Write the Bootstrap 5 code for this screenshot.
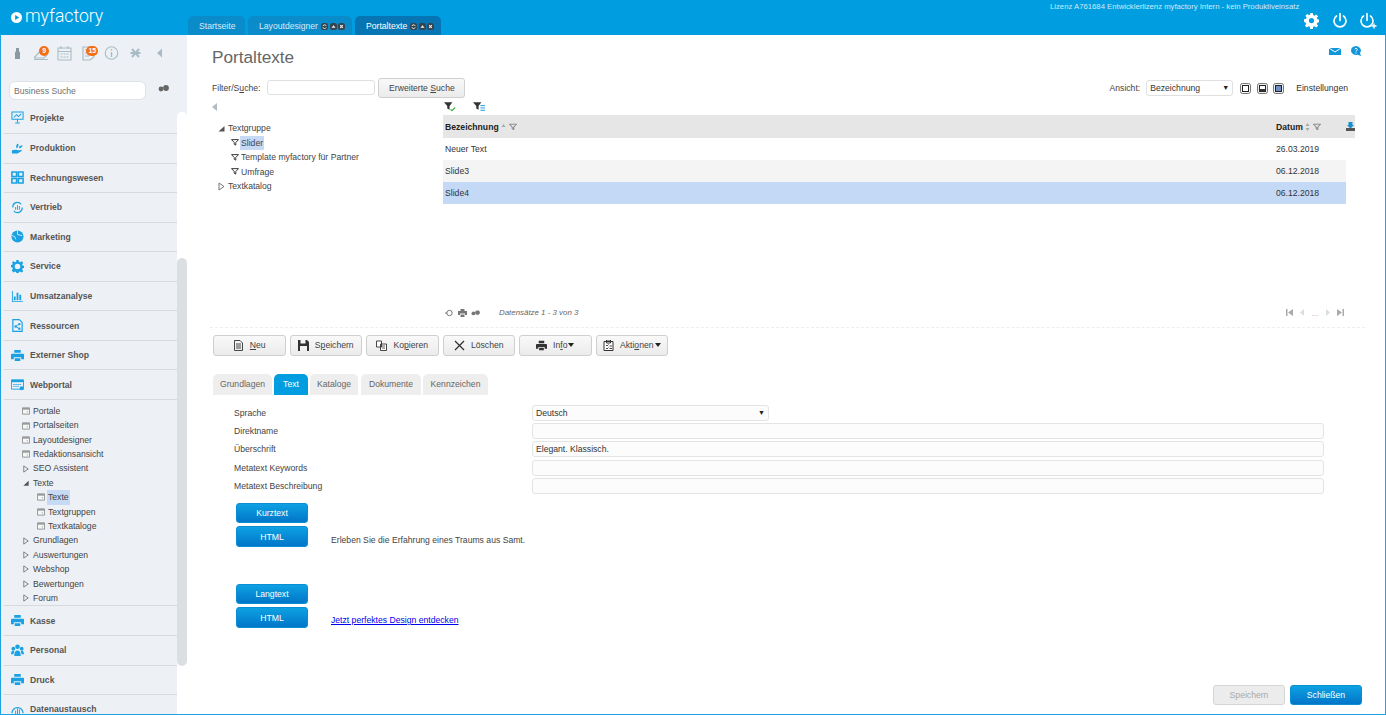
<!doctype html>
<html lang="de">
<head>
<meta charset="utf-8">
<title>Portaltexte</title>
<link rel="stylesheet" href="https://cdn.jsdelivr.net/npm/bootstrap@5.3.0/dist/css/bootstrap.min.css">
<style>
html,body{height:100%;}
body{width:1386px;height:715px;overflow:hidden;font:8.65px/12px "Liberation Sans",Arial,sans-serif;color:#444;background:#fff;}
.frame{width:1386px;height:715px;border:solid #1ea2e0;border-width:0 1px 1px 1px;}
.topbar{height:35px;background:#009ee0;margin:0 -1px;position:relative;}
.brand{width:188px;padding:4px 0 0 11px;color:#fff;font:300 17.6px/24px Roboto,"Liberation Sans",sans-serif;}
.brand svg{width:11px;height:11px;margin-right:3px;margin-top:8px;flex:none;}
.tabstrip{padding-top:16px;gap:3px;}
.toptab{height:19px;padding:1px 0 0 11px;background:#0a8ccb;color:#d6eaf5;border-radius:5px 5px 0 0;line-height:19px;white-space:nowrap;}
.toptab.on{background:#0775b3;color:#fff;}
.t1{width:57px;}.t2{width:104px;}.t3{width:86px;}
.tabctl{width:7px;height:7px;margin-left:1.6px;vertical-align:-1px;}
.tabctl.lead{margin-left:3px;}
.toptright{margin-left:auto;width:336px;position:relative;}
.lic{color:#cfeaf8;font-size:7.72px;line-height:10px;padding-top:2px;white-space:nowrap;}
.ticons{padding:0 9px 0 0;gap:13.5px;justify-content:flex-end;}
.ticons svg{width:15px;height:17px;}
.ticons svg.pw{width:14px;}
.ticons svg.pwp{width:17px;}
.bodyrow{height:679px;}
.side{width:186px;flex:none;background:#edf1f5;position:relative;overflow:hidden;color:#555;}
.sideic{height:46px;padding:10px 0 0 9px;}
.sideic svg{width:15px;height:16px;margin-right:8.6px;color:#a9bcc6;}
.icwrap{position:relative;display:block;height:16px;}
.notif{position:absolute;top:1px;right:8px;background:#f36f12;color:#fff;font-size:7px;font-weight:700;line-height:10px;height:10px;min-width:10px;border-radius:5px;padding:0 1px;text-align:center;}
.notif.wide{right:6px;min-width:12px;}
.srch{padding:0 0 0 8px;height:30px;}
.srch input{width:137px;height:19px;font-size:8.65px;padding:0 4px;border:1px solid #dfe3e6;border-radius:6px;background:#fff;color:#555;box-shadow:none;}
.srch input::placeholder{color:#707070;opacity:1;}
.srch svg{width:11px;height:7px;margin-left:12px;margin-top:4px;color:#666;}
.sideitem{width:173px;margin-left:3px;height:29.55px;border-bottom:1px solid #d6dadd;display:flex;align-items:center;padding-left:7px;font-weight:700;color:#555;}
.sideitem.first{height:23px;padding-bottom:9px;}
.sideitem svg{width:13px;height:13px;margin-right:6px;color:#1aa1e4;flex:none;}
.subtree{height:206.5px;width:173px;margin-left:3px;padding-top:4px;border-bottom:1px solid #d6dadd;}
.tnode{height:14.4px;line-height:14.4px;white-space:nowrap;color:#444;display:flex;align-items:center;}
.l1{padding-left:18px;}.l2{padding-left:33px;}
.tnode svg{width:8px;height:8px;margin-right:3px;flex:none;color:#777;}
.sel{background:#c6daf6;padding:0 1px;margin-left:-1px;}
.trk{position:absolute;left:176px;top:77px;bottom:0;width:10px;background:#fff;border-radius:5px 5px 0 0;}
.thumb{position:absolute;left:176px;top:223px;height:408px;width:10px;background:#dcdfe1;border-radius:5px;}
.clip{overflow:hidden;height:679px;}
.maincol{flex:1;min-width:0;padding-left:25px;position:relative;}
.titlerow{height:43px;}
.pagetitle{font-size:17.2px;line-height:22px;color:#666;font-weight:400;margin:11px 0 0;}
.mailic{padding:11px 23px 0 0;margin-left:auto;width:60px;gap:9px;align-items:flex-start;justify-content:flex-end;}
.mailic svg{width:12px;height:10px;color:#1296db;}
.filterrow{height:22px;width:1136px;}
.plain{border:1px solid #e0e0e0;border-radius:3px;background:#fff;box-shadow:none;font-size:8.65px;color:#333;padding:0 3px;}
.filterlab{padding-top:2px;}
.findin{width:108px;height:15px;margin:0 3px 0 7px;}
.gbtn{background:linear-gradient(#f9f9f9,#ebebeb);border:1px solid #cfcfcf;border-radius:3px;font-size:8.65px;line-height:12px;color:#444;padding:0;white-space:nowrap;}
.findbtn{width:87px;height:20px;}
.viewright{padding-top:2px;}
.viewsel{width:87px;height:16px;line-height:14px;margin:0 7px 0 6px;padding:0 3px;display:flex;justify-content:space-between;color:#333;}
.viewsel i,.langsel i{font-style:normal;font-size:7px;color:#222;}
.vic{width:11px;height:11px;margin-right:5.5px;}
.einst{margin-left:6.5px;color:#333;}
.mid{height:227px;width:1153px;}
.treecol{width:231px;flex:none;}
.collapse-ic{height:14px;padding-top:3px;color:#b5bcc0;}
.collapse-ic svg{width:6px;height:8px;display:block;}
.treein{padding:7px 0 0 5px;}
.treein .tnode{height:14.5px;line-height:14.5px;}
.treein .tnode svg{width:9px;height:9px;margin-right:2px;}
.treein .sub{padding-left:14px;}
.treein .sub svg{margin-right:2px;color:#333;width:8px;height:7px;}
.gridcol{flex:1;min-width:0;display:flex;flex-direction:column;}
.gridic{height:15px;padding:2px 0 0 1px;gap:16px;}
.gridic svg{width:13px;height:10px;}
.ghead{height:23px;background:#e6e6e6;width:912px;color:#222;font-weight:700;align-items:center;}
.grow{height:22px;width:903px;align-items:center;color:#333;}
.grow.alt{background:#f4f4f4;}.grow.cur{background:#c4d9f6;}
.c1{width:833px;padding-left:2px;flex:none;}
.c2{flex:none;}
.ghead svg{width:8px;height:8px;margin-left:3px;color:#777;}
.ghead .sort{width:5px;margin:0 0 0 2px;color:#aaa;}
.gh1{width:833px;padding-left:2px;flex:none;display:flex;align-items:center;}
.gh2{width:70px;flex:none;display:flex;align-items:center;}
.gh3 svg{width:9px;height:9px;margin:0;color:#168fd0;}
.pager{margin-top:auto;height:22px;padding:0 0 7px 2px;align-items:center;width:903px;color:#777;}
.pager svg{width:9px;height:8px;margin-right:4px;color:#777;}
.pager em{margin-left:15px;font-size:7.9px;color:#666;}
.pgnav{margin-left:auto;gap:5.7px;align-items:center;color:#bbb;padding-right:2px;}
.pgnav svg{width:7px;height:7px;margin:0;color:#aaa;}
.pgnav svg.dim{color:#ddd;}
.dash{border-top:1px dashed #eee;width:1155px;margin-left:-2px;height:8px;}
.tools{height:20px;gap:4px;margin-left:1px;}
.tool{width:72.5px;height:20.5px;display:flex;align-items:center;justify-content:center;gap:6px;}
.tool svg{width:11px;height:11px;color:#333;flex:none;}
.tool .tri{width:6px;height:4px;margin-left:-5px;}
.formtabs{height:22px;margin:19px 0 0 1px;gap:2px;}
.ftab{height:21px;line-height:21px;background:#eeeeee;color:#666;border-radius:5px 5px 0 0;padding:0;text-align:center;}
.ftab.on{background:#009ee0;color:#fff;}
.f1{width:59px;}.f2{width:34px;}.f3{width:48px;}.f4{width:60px;margin-left:1px;}.f5{width:65px;}
.formarea{padding:8px 0 0 22px;}
.frow{height:18.2px;align-items:center;}
.flabel{width:298px;flex:none;color:#444;}
.finput{width:792px;height:16px;background:#fcfcfc;border:1px solid #e4e4e4;border-radius:3px;font-size:8.65px;padding:0 3px;box-shadow:none;color:#333;}
.langsel{width:237px;height:16px;background:#fcfcfc;border:1px solid #e4e4e4;border-radius:3px;padding:0 3px;display:flex;justify-content:space-between;line-height:14px;color:#333;}
.bluewrap{padding:8px 0 0 2px;}
.bbtn{display:block;width:72px;height:20.5px;padding:0;background:linear-gradient(#0ea1e2,#0176c9);border:1px solid #0a8fd4;border-radius:3px;color:#fff;font-weight:400;font-size:8.65px;line-height:18px;margin-bottom:3px;}
.blockrow{height:81px;}
.blocktext{margin-left:23px;padding-top:31px;line-height:12px;color:#444;}
.blocktext a{color:#0000ee;text-decoration:underline;}
.blocktext.lnk{padding-top:30px;}
.footbtns{position:absolute;right:23px;bottom:9px;gap:5px;}
.footbtns button{width:72px;height:20px;padding:0;font-size:8.65px;margin:0;line-height:18px;}
.disb{background:#ececec;border:1px solid #d5d5d5;border-radius:3px;color:#aaa;}
u{text-decoration-thickness:1px;}
</style>
</head>
<body>
<svg width="0" height="0" class="d-none">
<defs>
<symbol id="tri-r" viewBox="0 0 9 9"><path d="M2 1l5 3.5L2 8z" fill="none" stroke="currentColor"/></symbol>
<symbol id="tri-d" viewBox="0 0 9 9"><path d="M7.5 2v5.5H1.5z" fill="#555"/></symbol>
<symbol id="win" viewBox="0 0 9 9"><path d="M.5 1h8v7h-8z" fill="#f6f6f6" stroke="#8c8c8c"/><path d="M.5 1h8v2h-8z" fill="#9a9a9a"/><path d="M5 5h1.500v1.500z" fill="#777"/></symbol>
<symbol id="funnel" viewBox="0 0 9 8"><path d="M.5.7h8L5.400 4v3L3.600 6V4z" fill="none" stroke="currentColor" stroke-width="1.100"/></symbol>
<symbol id="printer" viewBox="0 0 14 14"><path d="M3.500 1h7v3h-7zM1 5h12a1 1 0 011 1v5h-3V9H3v2H0V6a1 1 0 011-1zM4 10h6v3H4z" fill="currentColor"/></symbol>
<symbol id="dots" viewBox="0 0 11 7"><circle cx="3" cy="4" r="2.400" fill="currentColor"/><circle cx="8" cy="3" r="2.900" fill="currentColor"/></symbol>
<symbol id="tabc" viewBox="0 0 7 7"><rect width="7" height="7" rx="2.500" fill="#35444e"/><path d="M2.200 2.200l2.600 2.600M4.800 2.200L2.200 4.800" stroke="#eef3f6" stroke-width="1.100"/></symbol>
<symbol id="tabu" viewBox="0 0 7 7"><rect width="7" height="7" rx="2.500" fill="#35444e"/><path d="M1.500 4.800L3.500 2.200l2 2.600z" fill="#eef3f6"/></symbol>
<symbol id="tabr" viewBox="0 0 7 7"><rect width="7" height="7" rx="2.500" fill="#35444e"/><path d="M5.200 2.800A1.800 1.800 0 001.900 3M1.900 4.300a1.800 1.800 0 003.300.2" fill="none" stroke="#eef3f6"/></symbol>
</defs>
</svg>
<div class="frame d-flex flex-column">
  <header class="topbar d-flex">
    <div class="brand d-flex align-items-start">
      <svg viewBox="0 0 12 12"><circle cx="6" cy="6" r="6" fill="#fff"/><path d="M4.500 3.400L9 6l-4.500 2.600z" fill="#009ee0"/></svg>
      <span>myfactory</span>
    </div>
    <nav class="tabstrip d-flex">
      <div class="toptab t1">Startseite</div>
      <div class="toptab t2">Layoutdesigner<svg class="tabctl lead"><use href="#tabr"/></svg><svg class="tabctl"><use href="#tabu"/></svg><svg class="tabctl"><use href="#tabc"/></svg></div>
      <div class="toptab t3 on">Portaltexte<svg class="tabctl lead"><use href="#tabr"/></svg><svg class="tabctl"><use href="#tabu"/></svg><svg class="tabctl"><use href="#tabc"/></svg></div>
    </nav>
    <div class="toptright">
      <div class="lic">Lizenz A761684 Entwicklerlizenz myfactory Intern - kein Produktiveinsatz</div>
      <div class="ticons d-flex">
        <svg viewBox="0 0 16 16"><path fill="#fff" fill-rule="evenodd" d="M6.600 0h2.800l.4 2.200 1.300.6L13 1.500l2 2-1.300 1.900.5 1.300 2.300.4v2.800l-2.300.4-.5 1.300 1.300 1.900-2 2-1.900-1.300-1.300.5-.4 2.300H6.600l-.4-2.300-1.300-.5L3 15.500l-2-2 1.300-1.900-.5-1.300L0 9.400V6.600l2.300-.4.5-1.300L1.500 3l2-2 1.900 1.300 1.300-.6zM8 5.200a2.800 2.800 0 100 5.600 2.800 2.800 0 000-5.600z"/></svg>
        <svg class="pw" viewBox="0 0 14 16"><path d="M7 1v7M3.500 3.500a6 6 0 107 0" fill="none" stroke="#fff" stroke-width="1.700" stroke-linecap="round"/></svg>
        <svg class="pwp" viewBox="0 0 17 16"><path d="M7 1v7M3.500 3.500a6 6 0 107 0" fill="none" stroke="#fff" stroke-width="1.600" stroke-linecap="round"/><path d="M14 11v5M11.500 13.500h5" stroke="#fff" stroke-width="1.400"/></svg>
      </div>
    </div>
  </header>
  <div class="bodyrow d-flex">
    <aside class="side">
      <div class="clip">
        <div class="sideic d-flex">
          <span class="icwrap"><svg viewBox="0 0 15 16"><path d="M6 3h3v3l1 1.500V14H5V7.500L6 6z" fill="#8b9aa2"/></svg></span>
          <span class="icwrap"><svg viewBox="0 0 15 16"><path d="M0 13L7 5l6 5-3 3H0zM0 14.500h14" fill="none" stroke="currentColor" stroke-width="1.200"/></svg><b class="notif">9</b></span>
          <span class="icwrap"><svg viewBox="0 0 15 16"><path d="M1 3h13v12H1zM1 6.500h13M4 1v3M11 1v3M3.500 9h2M6.500 9h2M9.500 9h2M3.500 12h2M6.500 12h2M9.500 12h2" fill="none" stroke="currentColor" stroke-width="1.100"/></svg></span>
          <span class="icwrap"><svg viewBox="0 0 15 16"><path d="M2 2h11v10l-4 3H2zM4 5h7M4 8h7M4 11h4" fill="none" stroke="currentColor" stroke-width="1.200"/></svg><b class="notif wide">15</b></span>
          <span class="icwrap"><svg viewBox="0 0 15 16"><circle cx="7.500" cy="8" r="6.300" fill="none" stroke="currentColor" stroke-width="1.100"/><path d="M7.500 7v5M7.500 4v1.600" stroke="currentColor" stroke-width="1.400"/></svg></span>
          <span class="icwrap"><svg viewBox="0 0 15 16"><path d="M4 4l7 8M11 4l-7 8M2.500 8h10" stroke="currentColor" stroke-width="2"/></svg></span>
          <span class="icwrap"><svg viewBox="0 0 15 16"><path d="M10 3.500v9L5 8z" fill="currentColor"/></svg></span>
        </div>
        <div class="srch d-flex align-items-start">
          <input class="form-control" type="text" placeholder="Business Suche" aria-label="Business Suche">
          <svg><use href="#dots"/></svg>
        </div>
        <div class="sideitem first"><svg viewBox="0 0 14 14"><path d="M1 1h12v8H1zM7 9v3M4.500 13h5M3 7l3-3 2 2 3-3" fill="none" stroke="currentColor" stroke-width="1.100"/></svg>Projekte</div>
        <div class="sideitem"><svg viewBox="0 0 14 14"><path d="M1 9c3-1 5-1 7 0l3-.5c1 .2 1 1 0 1.500l-4 2.500H1zM6 7c-1-3 0-5 2-5 0 2 0 4-2 5zM8.500 6.500c0-2 2-3 4-3-.5 2-2 3.500-4 3z" fill="currentColor"/></svg>Produktion</div>
        <div class="sideitem"><svg viewBox="0 0 14 14"><path d="M1 1h5v5H1zM8 1h5v5H8zM1 8h5v5H1zM8 8h5v5H8z" fill="none" stroke="currentColor" stroke-width="1.700"/></svg>Rechnungswesen</div>
        <div class="sideitem"><svg viewBox="0 0 14 14"><path d="M2 7a5 5 0 019-3.500M12 7a5 5 0 01-9 3.500" fill="none" stroke="currentColor" stroke-width="1.300"/><path d="M4.500 6.500h1v3h-1zM6.500 4.500h1v5h-1zM8.500 5.500h1v4h-1z" fill="currentColor"/></svg>Vertrieb</div>
        <div class="sideitem"><svg viewBox="0 0 14 14"><circle cx="7" cy="7" r="6.500" fill="currentColor"/><path d="M1 6l3 1 1 3M7 .5V5l5 1" fill="none" stroke="#edf1f5" stroke-width=".9"/></svg>Marketing</div>
        <div class="sideitem"><svg viewBox="0 0 14 14"><path fill="currentColor" fill-rule="evenodd" d="M5.800 0h2.400l.3 2 1.200.5L11.500 1.300l1.700 1.700-1.200 1.700.5 1.200 2 .3v2.400l-2 .3-.5 1.200 1.200 1.700-1.700 1.700-1.800-1.200-1.200.5-.3 2H5.800l-.3-2-1.200-.5-1.800 1.200L.8 11l1.200-1.700-.5-1.200-2-.3V5.400l2-.3.5-1.200L.8 2.900l1.700-1.600 1.800 1.200 1.200-.5zM7 4a3 3 0 100 6 3 3 0 000-6z"/></svg>Service</div>
        <div class="sideitem"><svg viewBox="0 0 14 14"><path d="M1 1v12h12v-1H2V1zM3 7h2v4H3zM6 3h2v8H6zM9 5h2v6H9z" fill="currentColor"/></svg>Umsatzanalyse</div>
        <div class="sideitem"><svg viewBox="0 0 14 14"><path d="M2 .7h7l3 3v9.600H2z" fill="none" stroke="currentColor" stroke-width="1.300"/><circle cx="5" cy="8" r="1.300" fill="currentColor"/><circle cx="9" cy="5.500" r="1.300" fill="currentColor"/><circle cx="9" cy="10.500" r="1.300" fill="currentColor"/><path d="M5 8l4-2.500M5 8l4 2.500" stroke="currentColor"/></svg>Ressourcen</div>
        <div class="sideitem"><svg><use href="#printer"/></svg>Externer Shop</div>
        <div class="sideitem"><svg viewBox="0 0 14 14"><path d="M.5 2h13v10H.5z" fill="none" stroke="currentColor"/><path d="M.5 2h13v2.500H.5z" fill="currentColor"/><path d="M2.500 7h9M2.500 9h6" stroke="currentColor" stroke-dasharray="1.500 .7"/><circle cx="11.500" cy="11" r="2.200" fill="currentColor"/></svg>Webportal</div>
        <div class="subtree">
          <div class="tnode l1"><svg><use href="#win"/></svg>Portale</div>
          <div class="tnode l1"><svg><use href="#win"/></svg>Portalseiten</div>
          <div class="tnode l1"><svg><use href="#win"/></svg>Layoutdesigner</div>
          <div class="tnode l1"><svg><use href="#win"/></svg>Redaktionsansicht</div>
          <div class="tnode l1"><svg><use href="#tri-r"/></svg>SEO Assistent</div>
          <div class="tnode l1"><svg><use href="#tri-d"/></svg>Texte</div>
          <div class="tnode l2"><svg><use href="#win"/></svg><span class="sel">Texte</span></div>
          <div class="tnode l2"><svg><use href="#win"/></svg>Textgruppen</div>
          <div class="tnode l2"><svg><use href="#win"/></svg>Textkataloge</div>
          <div class="tnode l1"><svg><use href="#tri-r"/></svg>Grundlagen</div>
          <div class="tnode l1"><svg><use href="#tri-r"/></svg>Auswertungen</div>
          <div class="tnode l1"><svg><use href="#tri-r"/></svg>Webshop</div>
          <div class="tnode l1"><svg><use href="#tri-r"/></svg>Bewertungen</div>
          <div class="tnode l1"><svg><use href="#tri-r"/></svg>Forum</div>
        </div>
        <div class="sideitem"><svg><use href="#printer"/></svg>Kasse</div>
        <div class="sideitem"><svg viewBox="0 0 14 14"><circle cx="7" cy="3" r="2.500" fill="currentColor"/><circle cx="2.500" cy="5" r="2" fill="currentColor"/><circle cx="11.500" cy="5" r="2" fill="currentColor"/><path d="M3.500 13c0-4 1-6 3.500-6s3.500 2 3.500 6zM0 11c0-2.500 1-4 2.500-4l1 1-1 3zM14 11c0-2.500-1-4-2.500-4l-1 1 1 3z" fill="currentColor"/></svg>Personal</div>
        <div class="sideitem"><svg><use href="#printer"/></svg>Druck</div>
        <div class="sideitem"><svg viewBox="0 0 14 14"><path d="M1 11a6 6 0 1112 0" fill="none" stroke="currentColor" stroke-width="1.300"/><path d="M4.500 8h1v4h-1zM6.500 6h1v6h-1zM8.500 7h1v5h-1z" fill="currentColor"/></svg>Datenaustausch</div>
      </div>
      <div class="trk"></div>
      <div class="thumb"></div>
    </aside>
    <main class="maincol">
      <div class="titlerow d-flex">
        <h1 class="pagetitle">Portaltexte</h1>
        <div class="mailic d-flex">
          <svg viewBox="0 0 12 10"><path d="M0 2h12v7H0z" fill="currentColor"/><path d="M0 2l6 4L12 2" fill="none" stroke="#fff"/></svg>
          <svg viewBox="0 0 12 10"><path d="M6 0a5 4.500 0 014 7l1 3-3.500-1.200A5 4.500 0 116 0z" fill="currentColor"/><path d="M4.800 3.300c.2-1.200 2.500-1.200 2.500.2 0 1-1.200 1-1.200 2M6 6.500v1" stroke="#fff" fill="none"/></svg>
        </div>
      </div>
      <div class="filterrow d-flex align-items-start">
        <label class="d-flex align-items-center filterlab">Filter/S<u>u</u>che:<input class="plain findin" type="text" aria-label="Filter"></label>
        <button class="gbtn findbtn" type="button">Erweiterte <u>S</u>uche</button>
        <div class="ms-auto d-flex align-items-center viewright">
          <span>Ansicht:</span>
          <div class="plain viewsel"><span>Bezeichnung</span><i>▼</i></div>
          <svg class="vic" viewBox="0 0 11 11"><rect x=".5" y=".5" width="10" height="10" rx="2" fill="#f5f5f5" stroke="#777"/><rect x="2.500" y="2.500" width="6" height="6" fill="#fff" stroke="#222"/></svg>
          <svg class="vic" viewBox="0 0 11 11"><rect x=".5" y=".5" width="10" height="10" rx="2" fill="#eee" stroke="#777"/><rect x="2.500" y="2.500" width="6" height="6" fill="#fff" stroke="#222"/><path d="M2.500 6h6v2.500h-6z" fill="#333"/></svg>
          <svg class="vic" viewBox="0 0 11 11"><rect x=".5" y=".5" width="10" height="10" rx="2" fill="#eee" stroke="#777"/><rect x="2.500" y="2.500" width="6" height="6" fill="#6f8fc7" stroke="#222"/></svg>
          <span class="einst">Einstellungen</span>
        </div>
      </div>
      <div class="mid d-flex">
        <div class="treecol">
          <div class="collapse-ic"><svg viewBox="0 0 6 8"><path d="M5 0v8L0 4z" fill="currentColor"/></svg></div>
          <div class="treein">
            <div class="tnode"><svg><use href="#tri-d"/></svg>Textgruppe</div>
            <div class="tnode sub"><svg><use href="#funnel"/></svg><span class="sel">Slider</span></div>
            <div class="tnode sub"><svg><use href="#funnel"/></svg>Template myfactory für Partner</div>
            <div class="tnode sub"><svg><use href="#funnel"/></svg>Umfrage</div>
            <div class="tnode"><svg><use href="#tri-r"/></svg>Textkatalog</div>
          </div>
        </div>
        <div class="gridcol">
          <div class="gridic d-flex">
            <svg viewBox="0 0 14 10"><path d="M0 0h9L6 4v4L3.500 6.500V4z" fill="#333"/><path d="M7 7.500l1.500 1.500L12 5.500" fill="none" stroke="#3bb54a" stroke-width="1.300"/></svg>
            <svg viewBox="0 0 14 10"><path d="M0 0h9L6 4v4L3.500 6.500V4z" fill="#333"/><path d="M8 3.500h5M8 6h5M8 8.500h5" stroke="#1296db"/></svg>
          </div>
          <div class="ghead d-flex">
            <div class="gh1">Bezeichnung<svg class="sort" viewBox="0 0 5 8"><path d="M2.500 1L4.500 4h-4z" fill="currentColor"/></svg><svg viewBox="0 0 9 8"><use href="#funnel"/></svg></div>
            <div class="gh2">Datum<svg class="sort" viewBox="0 0 5 8"><path d="M2.500 0L4.500 3h-4zM2.500 8L.5 5h4z" fill="currentColor"/></svg><svg viewBox="0 0 9 8"><use href="#funnel"/></svg></div>
            <div class="gh3 d-flex"><svg viewBox="0 0 9 9"><path d="M0 6h9v3H0z" fill="#555"/><path d="M2.500 0h4v3H8L4.500 6.500 1 3h1.500z" fill="currentColor"/></svg></div>
          </div>
          <div class="grow d-flex"><div class="c1">Neuer Text</div><div class="c2">26.03.2019</div></div>
          <div class="grow alt d-flex"><div class="c1">Slide3</div><div class="c2">06.12.2018</div></div>
          <div class="grow cur d-flex"><div class="c1">Slide4</div><div class="c2">06.12.2018</div></div>
          <div class="pager d-flex">
            <svg viewBox="0 0 9 8"><circle cx="4.500" cy="4" r="2.700" fill="none" stroke="currentColor"/><path d="M0 4h2" stroke="currentColor"/></svg>
            <svg viewBox="0 0 9 8"><path d="M2.500 0h4v2H9v4H7V4.500H2V6H0V2h2.500zM2.500 5.500h4V8h-4z" fill="currentColor"/></svg>
            <svg viewBox="0 0 11 7"><use href="#dots"/></svg>
            <em>Datensätze 1 - 3 von 3</em>
            <div class="pgnav d-flex">
              <svg viewBox="0 0 7 7"><path d="M0 0h1.500v7H0zM7 0v7L2 3.500z" fill="currentColor"/></svg>
              <svg class="dim" viewBox="0 0 7 7"><path d="M5 0v7L1 3.500z" fill="currentColor"/></svg>
              <span>...</span>
              <svg class="dim" viewBox="0 0 7 7"><path d="M2 0v7l4-3.500z" fill="currentColor"/></svg>
              <svg viewBox="0 0 7 7"><path d="M7 0H5.500v7H7zM0 0v7l5-3.500z" fill="currentColor"/></svg>
            </div>
          </div>
        </div>
      </div>
      <div class="dash"></div>
      <div class="tools d-flex">
        <button class="gbtn tool" type="button"><svg viewBox="0 0 11 11"><path d="M1.500.5h5.500l2.500 2.500v7.500h-8zM3 4h5M3 6h5M3 8h5" fill="none" stroke="currentColor" stroke-width=".9"/></svg><span><u>N</u>eu</span></button>
        <button class="gbtn tool" type="button"><svg viewBox="0 0 11 11"><path d="M0 0h9l2 2v9H0zM2.500 0v3.500h5V0zM2 6v5h7V6z" fill="currentColor" fill-rule="evenodd"/></svg><span>S<u>p</u>eichern</span></button>
        <button class="gbtn tool" type="button"><svg viewBox="0 0 11 11"><path d="M.5 1h5v6h-5zM4.500 4h6v6.500h-6z" fill="#fff" stroke="currentColor" stroke-width=".9"/><path d="M6 6h3M6 8h3" stroke="currentColor" stroke-width=".8"/></svg><span>Ko<u>p</u>ieren</span></button>
        <button class="gbtn tool" type="button"><svg viewBox="0 0 11 11"><path d="M1 1l9 9M10 1l-9 9" stroke="currentColor" stroke-width="1.300"/></svg><span>Löschen</span></button>
        <button class="gbtn tool" type="button"><svg viewBox="0 0 14 14"><use href="#printer"/></svg><span>In<u>f</u>o</span><svg class="tri" viewBox="0 0 6 4"><path d="M0 0h6L3 4z" fill="#222"/></svg></button>
        <button class="gbtn tool" type="button"><svg viewBox="0 0 11 11"><path d="M1 1.500h9v9H1zM3.500 0h4v3h-4z" fill="#fff" stroke="currentColor"/><path d="M3 5l1 1 1.500-1.500M6.500 6H9M3 8l1 1 1.500-1.500M6.500 8.500H9" fill="none" stroke="currentColor" stroke-width=".9"/></svg><span>Akti<u>o</u>nen</span><svg class="tri" viewBox="0 0 6 4"><path d="M0 0h6L3 4z" fill="#222"/></svg></button>
      </div>
      <div class="formtabs d-flex">
        <div class="ftab f1">Grundlagen</div>
        <div class="ftab f2 on">Text</div>
        <div class="ftab f3">Kataloge</div>
        <div class="ftab f4">Dokumente</div>
        <div class="ftab f5">Kennzeichen</div>
      </div>
      <div class="formarea">
        <div class="frow d-flex"><div class="flabel">Sprache</div><div class="langsel"><span>Deutsch</span><i>▼</i></div></div>
        <div class="frow d-flex"><div class="flabel">Direktname</div><input class="finput" type="text" aria-label="Direktname"></div>
        <div class="frow d-flex"><div class="flabel">Überschrift</div><input class="finput" type="text" aria-label="Überschrift" value="Elegant. Klassisch."></div>
        <div class="frow d-flex"><div class="flabel">Metatext Keywords</div><input class="finput" type="text" aria-label="Metatext Keywords"></div>
        <div class="frow d-flex"><div class="flabel">Metatext Beschreibung</div><input class="finput" type="text" aria-label="Metatext Beschreibung"></div>
        <div class="bluewrap">
          <div class="blockrow d-flex">
            <div><button class="bbtn" type="button">Kurztext</button><button class="bbtn" type="button">HTML</button></div>
            <div class="blocktext">Erleben Sie die Erfahrung eines Traums aus Samt.</div>
          </div>
          <div class="blockrow d-flex">
            <div><button class="bbtn" type="button">Langtext</button><button class="bbtn" type="button">HTML</button></div>
            <div class="blocktext lnk"><a href="#">Jetzt perfektes Design entdecken</a></div>
          </div>
        </div>
      </div>
      <div class="footbtns d-flex">
        <button class="disb" type="button">Speichern</button>
        <button class="bbtn" type="button">Schließen</button>
      </div>
    </main>
  </div>
</div>
</body>
</html>
